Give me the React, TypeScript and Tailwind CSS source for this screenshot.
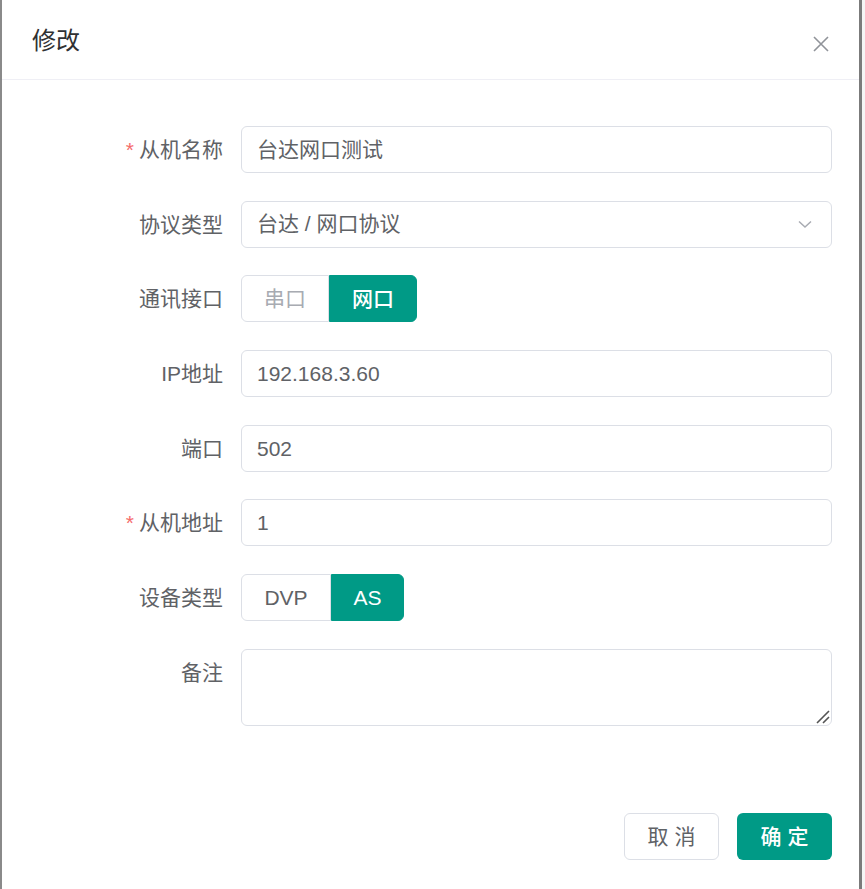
import React from 'react';

const FONT = '"Liberation Sans", "Noto Sans CJK SC", sans-serif';
const TEAL = 'bg-[#009a86]';

function Label({ text, required }: { text: string; required?: boolean }) {
  return (
    <div className="w-[209px] shrink-0 pr-[18px] text-right text-[21px] leading-[47px] text-[#606266]">
      {required && <span className="mr-[5px] text-[#f56c6c]">*</span>}
      {text}
    </div>
  );
}

function TextInput({ value }: { value: string }) {
  return (
    <div className="flex h-[47px] flex-1 items-center rounded-[6px] border border-[#dcdfe6] bg-white px-[15px] text-[21px] text-[#606266]">
      {value}
    </div>
  );
}

function Segments({ items, active, dimInactive }: { items: { label: string; w: number }[]; active: number; dimInactive?: boolean }) {
  return (
    <div className="flex h-[47px]">
      {items.map((it, i) => {
        const on = i === active;
        const first = i === 0;
        const last = i === items.length - 1;
        return (
          <div
            key={it.label}
            style={{ width: it.w }}
            className={[
              'flex items-center justify-center text-[21px]',
              first ? 'rounded-l-[6px]' : '',
              last ? 'rounded-r-[6px]' : '',
              on
                ? `${TEAL} border border-[#009a86] text-white font-medium`
                : `border border-[#dcdfe6] bg-white ${dimInactive ? 'text-[#a8abb2]' : 'text-[#606266]'}`,
              !first && !on ? 'border-l-0' : '',
            ].join(' ')}
          >
            {it.label}
          </div>
        );
      })}
    </div>
  );
}

function Row({ children }: { children: React.ReactNode }) {
  return <div className="flex items-start">{children}</div>;
}

export default function App() {
  return (
    <div className="flex h-[889px] w-[865px] bg-[#f5f5f5]" style={{ fontFamily: FONT }}>
      <div className="flex h-full w-[862px] flex-col border-l-2 border-r-[3px] border-l-[#8a8a8a] border-r-[#7b7b7b] bg-white">
        {/* header */}
        <div className="flex h-[80px] items-center justify-between border-b border-[#efeff5] pl-[30px] pr-[29px]">
          <div className="mt-[3px] text-[24px] text-[#303133]">修改</div>
          <svg width="18" height="18" viewBox="0 0 18 18" className="mt-[9px]">
            <path d="M2 2L16 16M16 2L2 16" stroke="#909399" strokeWidth="1.6" fill="none" />
          </svg>
        </div>

        {/* body */}
        <div className="flex flex-col gap-[27.7px] pl-[30px] pr-[27px] pt-[46px]">
          <Row>
            <Label text="从机名称" required />
            <TextInput value="台达网口测试" />
          </Row>
          <Row>
            <Label text="协议类型" />
            <div className="flex h-[47px] flex-1 items-center justify-between rounded-[6px] border border-[#dcdfe6] bg-white pl-[15px] pr-[18px] text-[21px] text-[#606266]">
              <span>台达 / 网口协议</span>
              <svg width="16" height="16" viewBox="0 0 16 16">
                <path d="M2 5.5L8 11L14 5.5" stroke="#a8abb2" strokeWidth="1.5" fill="none" />
              </svg>
            </div>
          </Row>
          <Row>
            <Label text="通讯接口" />
            <Segments
              items={[
                { label: '串口', w: 88 },
                { label: '网口', w: 88 },
              ]}
              active={1}
              dimInactive
            />
          </Row>
          <Row>
            <Label text="IP地址" />
            <TextInput value="192.168.3.60" />
          </Row>
          <Row>
            <Label text="端口" />
            <TextInput value="502" />
          </Row>
          <Row>
            <Label text="从机地址" required />
            <TextInput value="1" />
          </Row>
          <Row>
            <Label text="设备类型" />
            <Segments
              items={[
                { label: 'DVP', w: 90 },
                { label: 'AS', w: 73 },
              ]}
              active={1}
            />
          </Row>
          <Row>
            <Label text="备注" />
            <div className="relative h-[77px] flex-1 rounded-[6px] border border-[#dcdfe6] bg-white">
              <svg width="16" height="16" viewBox="0 0 16 16" className="absolute bottom-[1px] right-[1px]">
                <path d="M15 3L3 15M15 9L9 15" stroke="#555" strokeWidth="1.6" fill="none" />
              </svg>
            </div>
          </Row>
        </div>

        {/* footer */}
        <div className="mt-auto flex justify-end gap-[18px] pb-[29px] pr-[27px]">
          <button className="flex h-[47px] w-[95px] items-center justify-center rounded-[6px] border border-[#dcdfe6] bg-white text-[21px] tracking-[6px] text-[#606266]">
            <span className="pl-[6px]">取消</span>
          </button>
          <button className={`flex h-[47px] w-[95px] items-center justify-center rounded-[6px] ${TEAL} text-[21px] font-medium tracking-[6px] text-white`}>
            <span className="pl-[6px]">确定</span>
          </button>
        </div>
      </div>
    </div>
  );
}
